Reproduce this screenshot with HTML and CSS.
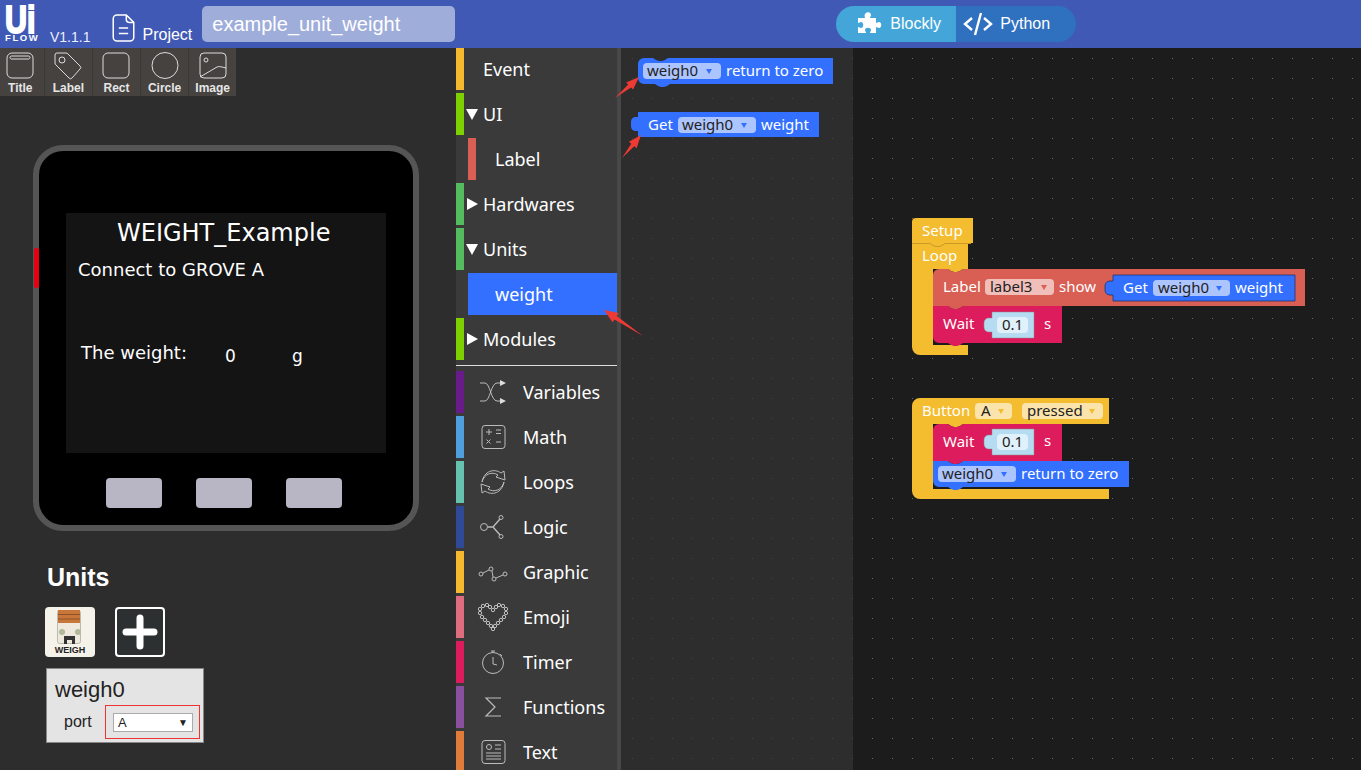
FILE: index.html
```html
<!DOCTYPE html>
<html>
<head>
  <title>UiFlow</title>
  <link rel="stylesheet" href="styles.css">
</head>
<body>
  <header class="topbar">
    <div class="logo">
      <span class="logo-ui">Ui</span>
      <span class="logo-flow">FLOW</span>
    </div>
    <span class="version">V1.1.1</span>
    <svg class="project-icon" width="23" height="28" viewBox="0 0 24 30" fill="none" stroke="#fff" stroke-width="1.600">
      <path d="M5 1h10l8 8v16a4 4 0 0 1-4 4H5a4 4 0 0 1-4-4V5a4 4 0 0 1 4-4z"/>
      <path d="M15 1v5a3 3 0 0 0 3 3h5M7 15h10M7 21h10"/>
    </svg>
    <span class="project-label">Project</span>
    <div class="project-name">example_unit_weight</div>
    <div class="mode-switch">
      <div class="mode mode-blockly">
        <svg width="26" height="26" viewBox="0 0 26 26" fill="#fff">
          <path d="M9 3c2-3 6-2 6 1 0 1-1 2-1 3h6v5c1 0 2-1 3-1 3 0 3 6 0 6-1 0-2-1-3-1v6h-6c0-1 1-2 1-3 0-3-6-3-6 0 0 1 1 2 1 3H2v-6c1 0 2 1 3 1 3 0 3-6 0-6-1 0-2 1-3 1V7h7c0-1-1-2 0-4z"/>
        </svg>
        <span>Blockly</span>
      </div>
      <div class="mode mode-python">
        <svg width="30" height="24" viewBox="0 0 30 24" fill="none" stroke="#fff" stroke-width="2.400">
          <path d="M9 6l-7 6 7 6M21 6l7 6-7 6M18 1l-6 22"/>
        </svg>
        <span>Python</span>
      </div>
    </div>
  </header>

  <main class="editor">
    <section class="left-panel">
      <div class="widgets">
        <div class="widget">
          <svg width="28" height="28" viewBox="0 0 28 28" fill="none" stroke="#ddd" stroke-width="1"><rect x="1" y="1" width="26" height="25" rx="5"/><rect x="4" y="4" width="20" height="3" rx="1.500"/></svg>
          <span>Title</span>
        </div>
        <div class="widget">
          <svg width="28" height="28" viewBox="0 0 28 28" fill="none" stroke="#ddd" stroke-width="1"><path d="M3 1h9a3 3 0 0 1 2 1l12 12a2 2 0 0 1 0 3l-8 9a2 2 0 0 1-3 0L2 13a3 3 0 0 1-1-2V3a2 2 0 0 1 2-2z"/><circle cx="8" cy="8" r="3"/></svg>
          <span>Label</span>
        </div>
        <div class="widget">
          <svg width="28" height="28" viewBox="0 0 28 28" fill="none" stroke="#ddd" stroke-width="1"><rect x="1" y="1" width="26" height="25" rx="5"/></svg>
          <span>Rect</span>
        </div>
        <div class="widget">
          <svg width="28" height="28" viewBox="0 0 28 28" fill="none" stroke="#ddd" stroke-width="1"><circle cx="14" cy="13.500" r="13"/></svg>
          <span>Circle</span>
        </div>
        <div class="widget">
          <svg width="28" height="28" viewBox="0 0 28 28" fill="none" stroke="#ddd" stroke-width="1"><rect x="1" y="1" width="26" height="25" rx="4"/><circle cx="7" cy="8" r="2"/><path d="M1 25l17-10c2-1 5 0 9 1"/></svg>
          <span>Image</span>
        </div>
      </div>

      <div class="device">
        <span class="device-led"></span>
        <div class="device-screen">
          <span class="screen-title">WEIGHT_Example</span>
          <span class="screen-text connect">Connect to GROVE A</span>
          <span class="screen-text weight-label">The weight:</span>
          <span class="screen-value value-num">0</span>
          <span class="screen-value value-unit">g</span>
        </div>
        <div class="device-buttons">
          <span class="device-button"></span>
          <span class="device-button"></span>
          <span class="device-button"></span>
        </div>
      </div>

      <div class="units">
        <h2 class="units-title">Units</h2>
        <div class="units-icons">
          <div class="unit-icon">
            <svg width="50" height="38" viewBox="0 0 50 38">
              <rect x="12.500" y="3.500" width="23" height="33" rx="2" fill="#efe9dd" stroke="#bdb9ad"/>
              <rect x="13" y="3" width="22" height="13" fill="#c9763a"/>
              <path d="M13 7.500h22M13 12h22" stroke="#8f5228"/>
              <circle cx="17" cy="25" r="3" fill="#b4b89a"/>
              <circle cx="33" cy="25" r="3" fill="#b4b89a"/>
              <path d="M19 37v-8h11v8h-3v-4h-5v4z" fill="#333"/>
            </svg>
            <span>WEIGH</span>
          </div>
          <div class="unit-add">
            <svg width="38" height="38" viewBox="0 0 38 38"><path d="M19 5v28M5 19h28" stroke="#fff" stroke-width="7" stroke-linecap="round"/></svg>
          </div>
        </div>
        <div class="unit-card">
          <div class="unit-name">weigh0</div>
          <div class="unit-row">
            <span class="unit-port">port</span>
            <div class="port-box">
              <div class="port-select"><span>A</span><span class="port-arrow">▼</span></div>
            </div>
          </div>
        </div>
      </div>
    </section>

    <nav class="toolbox">
      <div class="cat"><i class="bar c-event"></i><span class="cat-name">Event</span></div>
      <div class="cat"><i class="bar c-ui"></i><b class="tri tri-down"></b><span class="cat-name">UI</span></div>
      <div class="cat sub"><i class="bar c-label"></i><span class="cat-name">Label</span></div>
      <div class="cat"><i class="bar c-hard"></i><b class="tri"></b><span class="cat-name">Hardwares</span></div>
      <div class="cat"><i class="bar c-hard"></i><b class="tri tri-down"></b><span class="cat-name">Units</span></div>
      <div class="cat sub selected"><span class="cat-name">weight</span></div>
      <div class="cat"><i class="bar c-ui"></i><b class="tri"></b><span class="cat-name">Modules</span></div>
      <hr class="sep">
      <div class="cat icon-cat"><i class="bar c-var"></i>
        <svg class="cat-icon" width="28" height="24" viewBox="0 0 28 24" fill="none" stroke="#bbb"><path d="M1 3h5c5 0 6 18 12 18h5M1 21h5c5 0 6-18 12-18h5"/><path d="M21 0l6 3-6 3zM21 18l6 3-6 3z" fill="#ddd" stroke="none"/></svg>
        <span class="cat-name">Variables</span></div>
      <div class="cat icon-cat"><i class="bar c-math"></i>
        <svg class="cat-icon" width="28" height="26" viewBox="0 0 28 26" fill="none" stroke="#bbb"><rect x="3" y="1.500" width="23" height="23" rx="3"/><path d="M7 8h6M10 5v6M17 6h5M17 9.500h5M7.500 15.500l4 4M11.500 15.500l-4 4M17 18h5"/></svg>
        <span class="cat-name">Math</span></div>
      <div class="cat icon-cat"><i class="bar c-loop"></i>
        <svg class="cat-icon" width="28" height="26" viewBox="0 0 28 26" fill="none" stroke="#bbb"><path d="M3 13C5 5 13 2 19 6l-2 2 9 3-1-9-3 2C15-1 5 2 3 13z"/><path d="M25 13c-2 8-10 11-16 7l2-2-9-3 1 9 3-2c7 5 17 2 19-9z"/></svg>
        <span class="cat-name">Loops</span></div>
      <div class="cat icon-cat"><i class="bar c-logic"></i>
        <svg class="cat-icon" width="28" height="26" viewBox="0 0 28 26" fill="none" stroke="#bbb"><circle cx="5" cy="13" r="3.500"/><circle cx="22" cy="3.500" r="2"/><circle cx="22" cy="22.500" r="2"/><path d="M9 13h5l7-8M14 13l7 8" stroke-width="1.400"/></svg>
        <span class="cat-name">Logic</span></div>
      <div class="cat icon-cat"><i class="bar c-event"></i>
        <svg class="cat-icon" width="30" height="24" viewBox="0 0 30 24" fill="none" stroke="#bbb"><circle cx="3" cy="14" r="2"/><circle cx="13" cy="9" r="2"/><circle cx="16" cy="19" r="2"/><circle cx="27" cy="14" r="2"/><path d="M5 13l6-3M14 11l1 6M18 18l7-3"/></svg>
        <span class="cat-name">Graphic</span></div>
      <div class="cat icon-cat"><i class="bar c-emoji"></i>
        <svg class="cat-icon" width="30" height="28" viewBox="0 0 30 28" fill="none" stroke="#ccc" stroke-width=".9">
          <circle cx="5" cy="3" r="1.700"/><circle cx="9" cy="2" r="1.700"/><circle cx="12" cy="4" r="1.700"/><circle cx="15" cy="7" r="1.700"/><circle cx="18" cy="4" r="1.700"/><circle cx="21" cy="2" r="1.700"/><circle cx="25" cy="3" r="1.700"/><circle cx="28" cy="6" r="1.700"/><circle cx="28" cy="10" r="1.700"/><circle cx="26" cy="14" r="1.700"/><circle cx="23" cy="17" r="1.700"/><circle cx="20" cy="20" r="1.700"/><circle cx="17" cy="23" r="1.700"/><circle cx="15" cy="26" r="1.700"/><circle cx="13" cy="23" r="1.700"/><circle cx="10" cy="20" r="1.700"/><circle cx="7" cy="17" r="1.700"/><circle cx="4" cy="14" r="1.700"/><circle cx="2" cy="10" r="1.700"/><circle cx="2" cy="6" r="1.700"/>
        </svg>
        <span class="cat-name">Emoji</span></div>
      <div class="cat icon-cat"><i class="bar c-timer"></i>
        <svg class="cat-icon" width="26" height="26" viewBox="0 0 26 26" fill="none" stroke="#bbb"><circle cx="13" cy="14" r="10.500"/><path d="M11 2h4M13 2v2M13 8v7l4 1M20 5l2 2"/></svg>
        <span class="cat-name">Timer</span></div>
      <div class="cat icon-cat"><i class="bar c-func"></i>
        <svg class="cat-icon" width="26" height="24" viewBox="0 0 26 24" fill="none" stroke="#bbb" stroke-width="1.200"><path d="M21 3H6l9 9-9 9h15"/></svg>
        <span class="cat-name">Functions</span></div>
      <div class="cat icon-cat"><i class="bar c-text"></i>
        <svg class="cat-icon" width="28" height="26" viewBox="0 0 28 26" fill="none" stroke="#bbb"><rect x="3" y="1.500" width="23" height="23" rx="3"/><circle cx="10" cy="8" r="2.500"/><path d="M16 6h6M16 10h6M7 14h15M7 17h15M7 20h15"/></svg>
        <span class="cat-name">Text</span></div>
    </nav>

    <section class="flyout">
      <svg class="canvas" width="232" height="722">
        <g transform="translate(-621,-48)">
          <path class="bk-blue" d="M644 58h9l3 2 3 1h3l3-1 3-2h165v26H670l-3 2-3 1h-3l-3-1-3-2h-11a6 6 0 0 1-6-6V64a6 6 0 0 1 6-6z"/>
          <rect class="fld-blue" x="643" y="63" width="78" height="16" rx="4"/>
          <text class="fld-text" x="647" y="76">weigh0</text>
          <path class="arr-blue" d="M706 69l6 0-3 5z"/>
          <text class="bk-text" x="726" y="76">return to zero</text>

          <path class="bk-blue" d="M638 112h181v25H638v-6h-2c-3 0-5-2-5-5v-4c0-3 2-5 5-5h2v-5z"/>
          <text class="bk-text" x="648" y="130">Get</text>
          <rect class="fld-blue" x="678" y="117" width="78" height="16" rx="4"/>
          <text class="fld-text" x="682" y="130">weigh0</text>
          <path class="arr-blue" d="M741 123l6 0-3 5z"/>
          <text class="bk-text" x="761" y="130">weight</text>
        </g>
      </svg>
    </section>

    <section class="workspace">
      <svg class="canvas" width="508" height="722">
        <g transform="translate(-853,-48)">
          <!-- setup / loop -->
          <path class="bk-yellow" d="M916 218h57v25h-5v26h-5l-3 2-3 1h-3l-3-1-3-2h-15v76h35v10h-48a8 8 0 0 1-8-8V222a4 4 0 0 1 4-4z"/>
          <path class="seam" d="M912 243.500h18l3 2 3 1h3l3-1 3-2h26"/>
          <text class="bk-text" x="922" y="236">Setup</text>
          <text class="bk-text" x="922" y="261">Loop</text>

          <path class="bk-pink" d="M933 306h15l3 2 3 1h3l3-1 3-2h99v37h-99l-3 2-3 1h-3l-3-1-3-2h-9a6 6 0 0 1-6-6z"/>
          <text class="bk-text" x="943" y="329">Wait</text>
          <path class="bk-value" d="M992 312h42v26h-42v-6h-3c-3 0-5-2-5-5v-4c0-3 2-5 5-5h3v-6z"/>
          <rect class="fld-value" x="997" y="317" width="31" height="16" rx="4"/>
          <text class="fld-text" x="1002" y="330">0.1</text>
          <text class="bk-text" x="1044" y="329">s</text>

          <path class="bk-red" d="M939 269h9l3 2 3 1h3l3-1 3-2h342v37H963l-3 2-3 1h-3l-3-1-3-2h-15v-31a6 6 0 0 1 6-6z"/>
          <text class="bk-text" x="943" y="292">Label</text>
          <rect class="fld-red" x="985" y="279" width="69" height="16" rx="4"/>
          <text class="fld-text" x="990" y="292">label3</text>
          <path class="arr-red" d="M1041 285l6 0-3 5z"/>
          <text class="bk-text" x="1059" y="292">show</text>

          <path class="bk-blue edge" d="M1113 275h182v26h-182v-6h-3c-3 0-5-2-5-5v-4c0-3 2-5 5-5h3v-6z"/>
          <text class="bk-text" x="1123" y="293">Get</text>
          <rect class="fld-blue" x="1153" y="280" width="77" height="16" rx="4"/>
          <text class="fld-text" x="1158" y="293">weigh0</text>
          <path class="arr-blue" d="M1216 286l6 0-3 5z"/>
          <text class="bk-text" x="1235" y="293">weight</text>

          <!-- button a -->
          <path class="bk-yellow" d="M920 398h189v26H963l-3 2-3 1h-3l-3-1-3-2h-15v65h176v10H920a8 8 0 0 1-8-8v-85a8 8 0 0 1 8-8z"/>
          <text class="bk-text" x="922" y="416">Button</text>
          <rect class="fld-yellow" x="975" y="403" width="37" height="16" rx="4"/>
          <text class="fld-text" x="981" y="416">A</text>
          <path class="arr-yellow" d="M998 409l6 0-3 5z"/>
          <rect class="fld-yellow" x="1022" y="403" width="81" height="16" rx="4"/>
          <text class="fld-text" x="1027" y="416">pressed</text>
          <path class="arr-yellow" d="M1089 409l6 0-3 5z"/>

          <path class="bk-blue" d="M933 461h15l3 2 3 1h3l3-1 3-2h166v26H963l-3 2-3 1h-3l-3-1-3-2h-9a6 6 0 0 1-6-6z"/>
          <rect class="fld-blue" x="938" y="466" width="78" height="16" rx="4"/>
          <text class="fld-text" x="942" y="479">weigh0</text>
          <path class="arr-blue" d="M1001 472l6 0-3 5z"/>
          <text class="bk-text" x="1021" y="479">return to zero</text>

          <path class="bk-pink" d="M939 424h9l3 2 3 1h3l3-1 3-2h99v37h-99l-3 2-3 1h-3l-3-1-3-2h-15v-31a6 6 0 0 1 6-6z"/>
          <text class="bk-text" x="943" y="447">Wait</text>
          <path class="bk-value" d="M992 429h42v26h-42v-6h-3c-3 0-5-2-5-5v-4c0-3 2-5 5-5h3v-6z"/>
          <rect class="fld-value" x="997" y="434" width="31" height="16" rx="4"/>
          <text class="fld-text" x="1002" y="447">0.1</text>
          <text class="bk-text" x="1044" y="446">s</text>
        </g>
      </svg>
    </section>

    <svg class="arrows" width="60" height="300" viewBox="0 0 60 300" fill="#ee3a35">
      <path d="M15 50L28.200 36.600 26.200 34.400 39 29 33.100 41.600 31 39.400z"/>
      <path d="M22 110L31.200 95.700 28.900 93.800 41 87 36.600 100.200 34.200 98.300z"/>
      <path d="M43 288L14.500 271.400 12.600 274.300 4 262 18.600 265.100 16.700 268z"/>
    </svg>
  </main>
</body>
</html>
```

FILE: styles.css
```css
* {
  box-sizing: border-box;
}

html, body {
  margin: 0;
  height: 770px;
  overflow: hidden;
}

body {
  font-family: "Liberation Sans", Arial, sans-serif;
  background: #2d2d2d;
  color: #fff;
}

/* top bar */
.topbar {
  display: flex;
  align-items: flex-start;
  height: 48px;
  background: #3f59b5;
  padding-left: 5px;
}

.logo {
  display: flex;
  flex-direction: column;
  width: 37px;
  margin-top: 5px;
}

.logo-ui {
  font-size: 38px;
  line-height: 30px;
  font-weight: 700;
  -webkit-text-stroke: 2px #fff;
  transform: scaleX(.8);
  transform-origin: left;
}

.logo-flow {
  font-size: 9.500px;
  line-height: 8px;
  font-weight: 700;
  letter-spacing: 1.600px;
  margin-top: -1px;
}

.version {
  font-size: 14px;
  margin: 29px 0 0 8px;
  color: #eef;
}

.project-icon {
  margin: 14px 0 0 22px;
}

.project-label {
  font-size: 16px;
  margin: 26px 0 0 7px;
}

.project-name {
  width: 253px;
  height: 36px;
  margin: 6px 0 0 10px;
  padding-left: 10px;
  background: #9fadda;
  border-radius: 5px;
  font-size: 20px;
  line-height: 36px;
}

.mode-switch {
  display: flex;
  height: 36px;
  margin: 6px 0 0 381px;
  border-radius: 18px;
  overflow: hidden;
  font-size: 16px;
}

.mode {
  display: flex;
  align-items: center;
}

.mode-blockly {
  width: 120px;
  padding-left: 20px;
  gap: 8px;
  background: #44a6d8;
}

.mode-python {
  width: 120px;
  padding-left: 7px;
  gap: 7px;
  background: #3071bf;
}

/* main area */
.editor {
  position: relative;
  display: flex;
  height: 722px;
}

.left-panel {
  width: 456px;
  background: #2d2d2d;
}

.widgets {
  display: flex;
  width: 239px;
  height: 48px;
  margin-left: -3px;
  gap: 1.500px;
  background: #3a3938;
}

.widget {
  flex: 1;
  display: flex;
  flex-direction: column;
  align-items: center;
  padding-top: 4px;
  background: #454240;
  font-size: 12px;
  font-weight: 700;
  color: #e6e6e6;
  line-height: 13px;
}

.widget span {
  margin-top: 2px;
}

.device {
  width: 386px;
  height: 386px;
  margin: 49px 0 0 33px;
  position: relative;
  background: #000;
  border: 6px solid #555;
  border-radius: 30px;
  padding: 62px 0 0 27px;
}

.device-led {
  position: absolute;
  left: -5px;
  top: 97px;
  width: 5px;
  height: 40px;
  background: #e60012;
  border-radius: 2px;
}

.device-screen {
  position: relative;
  width: 320px;
  height: 240px;
  background: #141414;
  font-family: "DejaVu Sans", sans-serif;
}

.device-screen span {
  position: absolute;
  white-space: nowrap;
}

.screen-title {
  left: 51px;
  top: 6px;
  font-size: 24px;
}

.connect {
  left: 12px;
  top: 46px;
}

.weight-label {
  left: 15px;
  top: 129px;
}

.screen-text {
  font-size: 18px;
}

.screen-value {
  font-size: 17px;
}

.value-num {
  left: 159px;
  top: 133px;
}

.value-unit {
  left: 226px;
  top: 133px;
}

.device-buttons {
  display: flex;
  gap: 34px;
  margin: 25px 0 0 40px;
}

.device-button {
  width: 56px;
  height: 30px;
  background: #b8b6c4;
  border-radius: 4px;
}

.units {
  margin: 30px 0 0 45px;
}

.units-title {
  margin: 0 0 0 2px;
  font-size: 25px;
  line-height: 32px;
}

.units-icons {
  display: flex;
  gap: 20px;
  margin-top: 14px;
}

.unit-icon {
  display: flex;
  flex-direction: column;
  align-items: center;
  width: 50px;
  height: 50px;
  background: #f5f2ea;
  border-radius: 4px;
  color: #222;
  font-size: 9px;
  font-weight: 700;
  line-height: 10px;
}

.unit-add {
  display: flex;
  align-items: center;
  justify-content: center;
  width: 50px;
  height: 50px;
  background: #2d3030;
  border: 2px solid #fff;
  border-radius: 4px;
}

.unit-card {
  width: 158px;
  height: 75px;
  margin: 11px 0 0 1px;
  padding: 8px 3px 0 8px;
  background: #e4e4e4;
  border: 1px solid #888;
  color: #222;
}

.unit-name {
  font-size: 22px;
  line-height: 26px;
}

.unit-row {
  display: flex;
  align-items: center;
  margin-top: 2px;
}

.unit-port {
  width: 50px;
  padding-left: 9px;
  font-size: 16px;
}

.port-box {
  width: 95px;
  height: 34px;
  padding: 7px 6px 0 7px;
  border: 1px solid #e33;
}

.port-select {
  display: flex;
  justify-content: space-between;
  align-items: center;
  height: 19px;
  padding: 0 4px;
  background: #fff;
  border: 1px solid #aaa;
  font-size: 13px;
}

.port-arrow {
  font-size: 10px;
}

/* toolbox */
.toolbox {
  width: 165px;
  height: 722px;
  overflow: hidden;
  background: #3a3a3a;
  border-right: 4px solid #484848;
  font-family: "Noto Sans", sans-serif;
  font-size: 18px;
}

.cat {
  position: relative;
  display: flex;
  align-items: center;
  height: 42px;
  margin-bottom: 3px;
  padding-left: 27px;
}

.bar {
  position: absolute;
  left: 0;
  top: 0;
  bottom: 0;
  width: 8px;
}

.sub {
  margin-left: 12px;
  padding-left: 27px;
}

.selected {
  background: #3370ff;
}

.tri {
  position: absolute;
  left: 11px;
  top: 15px;
  width: 0;
  height: 0;
  border-left: 11px solid #fff;
  border-top: 6px solid transparent;
  border-bottom: 6px solid transparent;
}

.tri-down {
  left: 10px;
  top: 16px;
  border-top: 11px solid #fff;
  border-left: 6px solid transparent;
  border-right: 6px solid transparent;
  border-bottom: 0;
}

.sep {
  height: 1px;
  margin: 5px 0 5px;
  border: 0;
  background: #ddd;
}

.icon-cat {
  padding-left: 22px;
}

.cat-icon {
  flex: none;
  width: 30px;
}

.icon-cat .cat-name {
  position: absolute;
  left: 67px;
}

.c-event { background: #f5b82e; }
.c-ui { background: #7ed000; }
.c-label { background: #d95f54; }
.c-hard { background: #55bb5f; }
.c-var { background: #6a1b8a; }
.c-math { background: #4e9fdc; }
.c-loop { background: #66c2ae; }
.c-logic { background: #2f4a96; }
.c-emoji { background: #e06c80; }
.c-timer { background: #dc1c5c; }
.c-func { background: #8a4f9e; }
.c-text { background: #e07b3a; }

/* block canvases */
.flyout {
  width: 232px;
  background-color: #2d2d2d;
  background-image: radial-gradient(circle at .5px .5px, #444 .7px, transparent .7px);
  background-size: 20px 20px;
  background-position: 11px 10px;
}

.workspace {
  flex: 1;
  background-color: #1c1c1c;
  background-image: radial-gradient(circle at .5px .5px, #6a6a6a .7px, transparent .7px);
  background-size: 20px 20px;
  background-position: 19px 10px;
}

.canvas {
  display: block;
  font-family: "Noto Sans", sans-serif;
  font-size: 15px;
}

.bk-text { fill: #fff; }
.fld-text { fill: #222; }

.bk-blue { fill: #3370ff; }
.bk-red { fill: #d95f54; }
.bk-pink { fill: #dc1c5c; }
.bk-yellow { fill: #f4bc2f; }
.bk-value { fill: #b6dcf2; stroke: #888; stroke-width: .5; }
.edge { stroke: #20336e; stroke-width: .8; }
.seam { fill: none; stroke: #c99a26; }

.fld-blue { fill: #adc5ff; }
.fld-red { fill: #f0bfba; }
.fld-yellow { fill: #fbe4ac; }
.fld-value { fill: #e0f1fb; }

.arr-blue { fill: #3370ff; }
.arr-red { fill: #d95f54; }
.arr-yellow { fill: #f4bc2f; }

/* red markers on top of everything */
.arrows {
  position: absolute;
  left: 600px;
  top: 0;
}
```
